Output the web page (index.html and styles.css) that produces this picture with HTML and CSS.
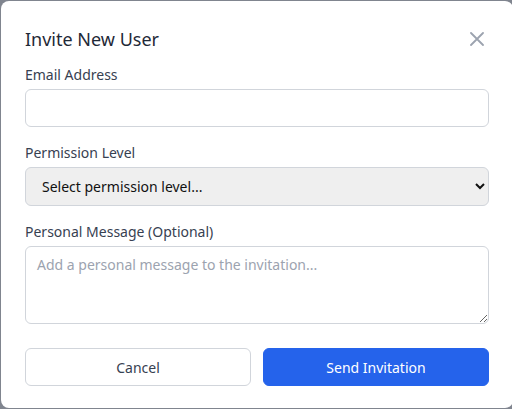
FILE: index.html
```html
<!DOCTYPE html>
<html lang="en">
<head>
    <meta charset="UTF-8">
    <title>Invite New User</title>
    <link rel="stylesheet" href="styles.css">
</head>
<body>

<div class="invitemodal">
    <div class="invitemodal-header">
        <h2>Invite New User</h2>
        <span class="inviteclose">
            <svg width="14" height="14" viewBox="0 0 14 14"><path d="M1 1L13 13M13 1L1 13" stroke="#9ca3af" stroke-width="1.8" stroke-linecap="round" fill="none"/></svg>
        </span>
    </div>

    <form class="inviteform">
        <div class="field">
            <label for="email">Email Address</label>
            <input type="email" id="email" name="email">
        </div>

        <div class="field">
            <label for="perm">Permission Level</label>
            <select id="perm" name="permission">
                <option value="">Select permission level...</option>
                <option value="viewer">Viewer</option>
                <option value="editor">Editor</option>
                <option value="admin">Admin</option>
            </select>
        </div>

        <div class="field">
            <label for="msg">Personal Message (Optional)</label>
            <textarea id="msg" name="message" placeholder="Add a personal message to the invitation..."></textarea>
        </div>

        <div class="invitebtns">
            <button type="button" class="cancelbtn">Cancel</button>
            <button type="submit" class="sendbtn">Send Invitation</button>
        </div>
    </form>
</div>

</body>
</html>
```

FILE: styles.css
```css
body {
    margin: 0;
    font-family: "Noto Sans", "Open Sans", sans-serif;
    background-color: #80858f; /* overlay */
    overflow: hidden;
    height: 409px;
}

/* The Modal */
.invitemodal {
    box-sizing: border-box;
    width: 512px;
    height: 407px;
    margin: 1px 0 0 1px;
    padding: 24px;
    background-color: #fff;
    border-radius: 8px;
}

.invitemodal-header {
    display: flex;
    justify-content: space-between;
    align-items: center;
    margin-bottom: 12px;
}

.invitemodal-header h2 {
    margin: 0;
    font-size: 18px;
    line-height: 28px;
    font-weight: 400;
    color: #1f2937;
}

.inviteclose {
    display: flex;
    margin-right: 5px;
    cursor: pointer;
}

.field {
    display: flex;
    flex-direction: column;
    margin-bottom: 16px;
}

.field label {
    font-size: 14px;
    line-height: 20px;
    color: #374151;
    margin-bottom: 4px;
}

.field input,
.field select,
.field textarea {
    box-sizing: border-box;
    width: 100%;
    font-family: inherit;
    font-size: 14px;
    border: 1px solid #d1d5db;
    border-radius: 6px;
}

.field input {
    height: 38px;
    padding: 8px 12px;
}

.field select {
    height: 39px;
    padding: 0 8px 0 12px;
    background-color: #efefef;
    color: #111;
}

.field textarea {
    height: 78px;
    padding: 8px 11px;
    resize: vertical;
}

.field textarea::placeholder {
    color: #9ca3af;
}

.invitebtns {
    display: flex;
    gap: 12px;
    margin-top: 24px;
}

.invitebtns button {
    flex: 1;
    height: 38px;
    font-family: inherit;
    font-size: 14px;
    border-radius: 6px;
    cursor: pointer;
}

.cancelbtn {
    background-color: #fff;
    border: 1px solid #d1d5db;
    color: #374151;
}

.sendbtn {
    background-color: #2563eb;
    border: 1px solid #2563eb;
    color: #fff;
}
```
